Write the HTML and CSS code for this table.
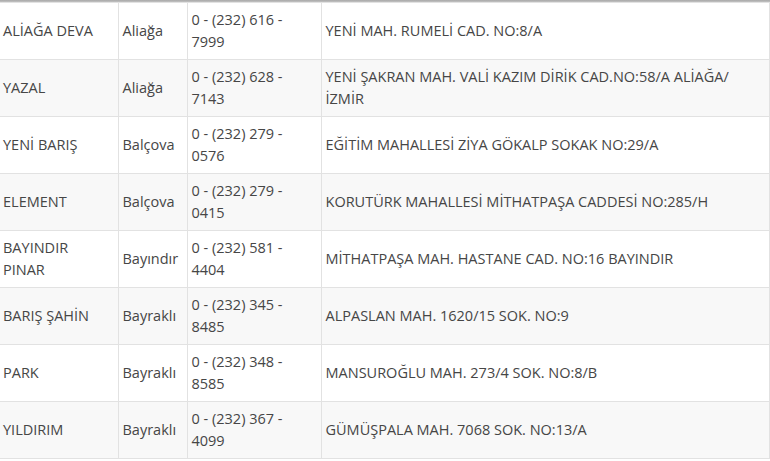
FILE: index.html
```html
<!DOCTYPE html>
<html lang="tr">
<head>
<meta charset="utf-8">
<title>Eczaneler</title>
<link rel="stylesheet" href="styles.css">
</head>
<body>
<div class="topbar"></div>
<table class="list">
  <colgroup>
    <col class="c-name"><col class="c-district"><col class="c-phone"><col class="c-addr">
  </colgroup>
  <tbody>
    <tr><td>ALİAĞA DEVA</td><td>Aliağa</td><td>0 - (232) 616 - 7999</td><td>YENİ MAH. RUMELİ CAD. NO:8/A</td></tr>
    <tr><td>YAZAL</td><td>Aliağa</td><td>0 - (232) 628 - 7143</td><td>YENİ ŞAKRAN MAH. VALİ KAZIM DİRİK CAD.NO:58/A ALİAĞA/ İZMİR</td></tr>
    <tr><td>YENİ BARIŞ</td><td>Balçova</td><td>0 - (232) 279 - 0576</td><td>EĞİTİM MAHALLESİ ZİYA GÖKALP SOKAK NO:29/A</td></tr>
    <tr><td>ELEMENT</td><td>Balçova</td><td>0 - (232) 279 - 0415</td><td>KORUTÜRK MAHALLESİ MİTHATPAŞA CADDESİ NO:285/H</td></tr>
    <tr><td>BAYINDIR PINAR</td><td>Bayındır</td><td>0 - (232) 581 - 4404</td><td>MİTHATPAŞA MAH. HASTANE CAD. NO:16 BAYINDIR</td></tr>
    <tr><td>BARIŞ ŞAHİN</td><td>Bayraklı</td><td>0 - (232) 345 - 8485</td><td>ALPASLAN MAH. 1620/15 SOK. NO:9</td></tr>
    <tr><td>PARK</td><td>Bayraklı</td><td>0 - (232) 348 - 8585</td><td>MANSUROĞLU MAH. 273/4 SOK. NO:8/B</td></tr>
    <tr><td>YILDIRIM</td><td>Bayraklı</td><td>0 - (232) 367 - 4099</td><td>GÜMÜŞPALA MAH. 7068 SOK. NO:13/A</td></tr>
  </tbody>
</table>
</body>
</html>
```
FILE: styles.css
```css
html, body {
  margin: 0;
  padding: 0;
  background: #fff;
}
body {
  font-family: "Open Sans", "Noto Sans", sans-serif;
  font-size: 14.5px;
  color: #464646;
  overflow: hidden;
}
.topbar {
  height: 3px;
  background: linear-gradient(#a8a8a8, #cfcfcf);
}
.list {
  border-collapse: collapse;
  table-layout: fixed;
  width: 769px;
  margin-top: -1px;
}
.c-name { width: 118px; }
.c-district { width: 69px; }
.c-phone { width: 134px; }
.c-addr { width: 448px; }
.list td {
  border: 1px solid #e2e2e2;
  padding: 6px 5px 6px 4px;
  line-height: 22px;
  height: 44px;
  vertical-align: middle;
}
.list td:first-child {
  border-left: none;
  padding-left: 3px;
}
.list tr:nth-child(even) td {
  background: #f8f8f8;
}
```
